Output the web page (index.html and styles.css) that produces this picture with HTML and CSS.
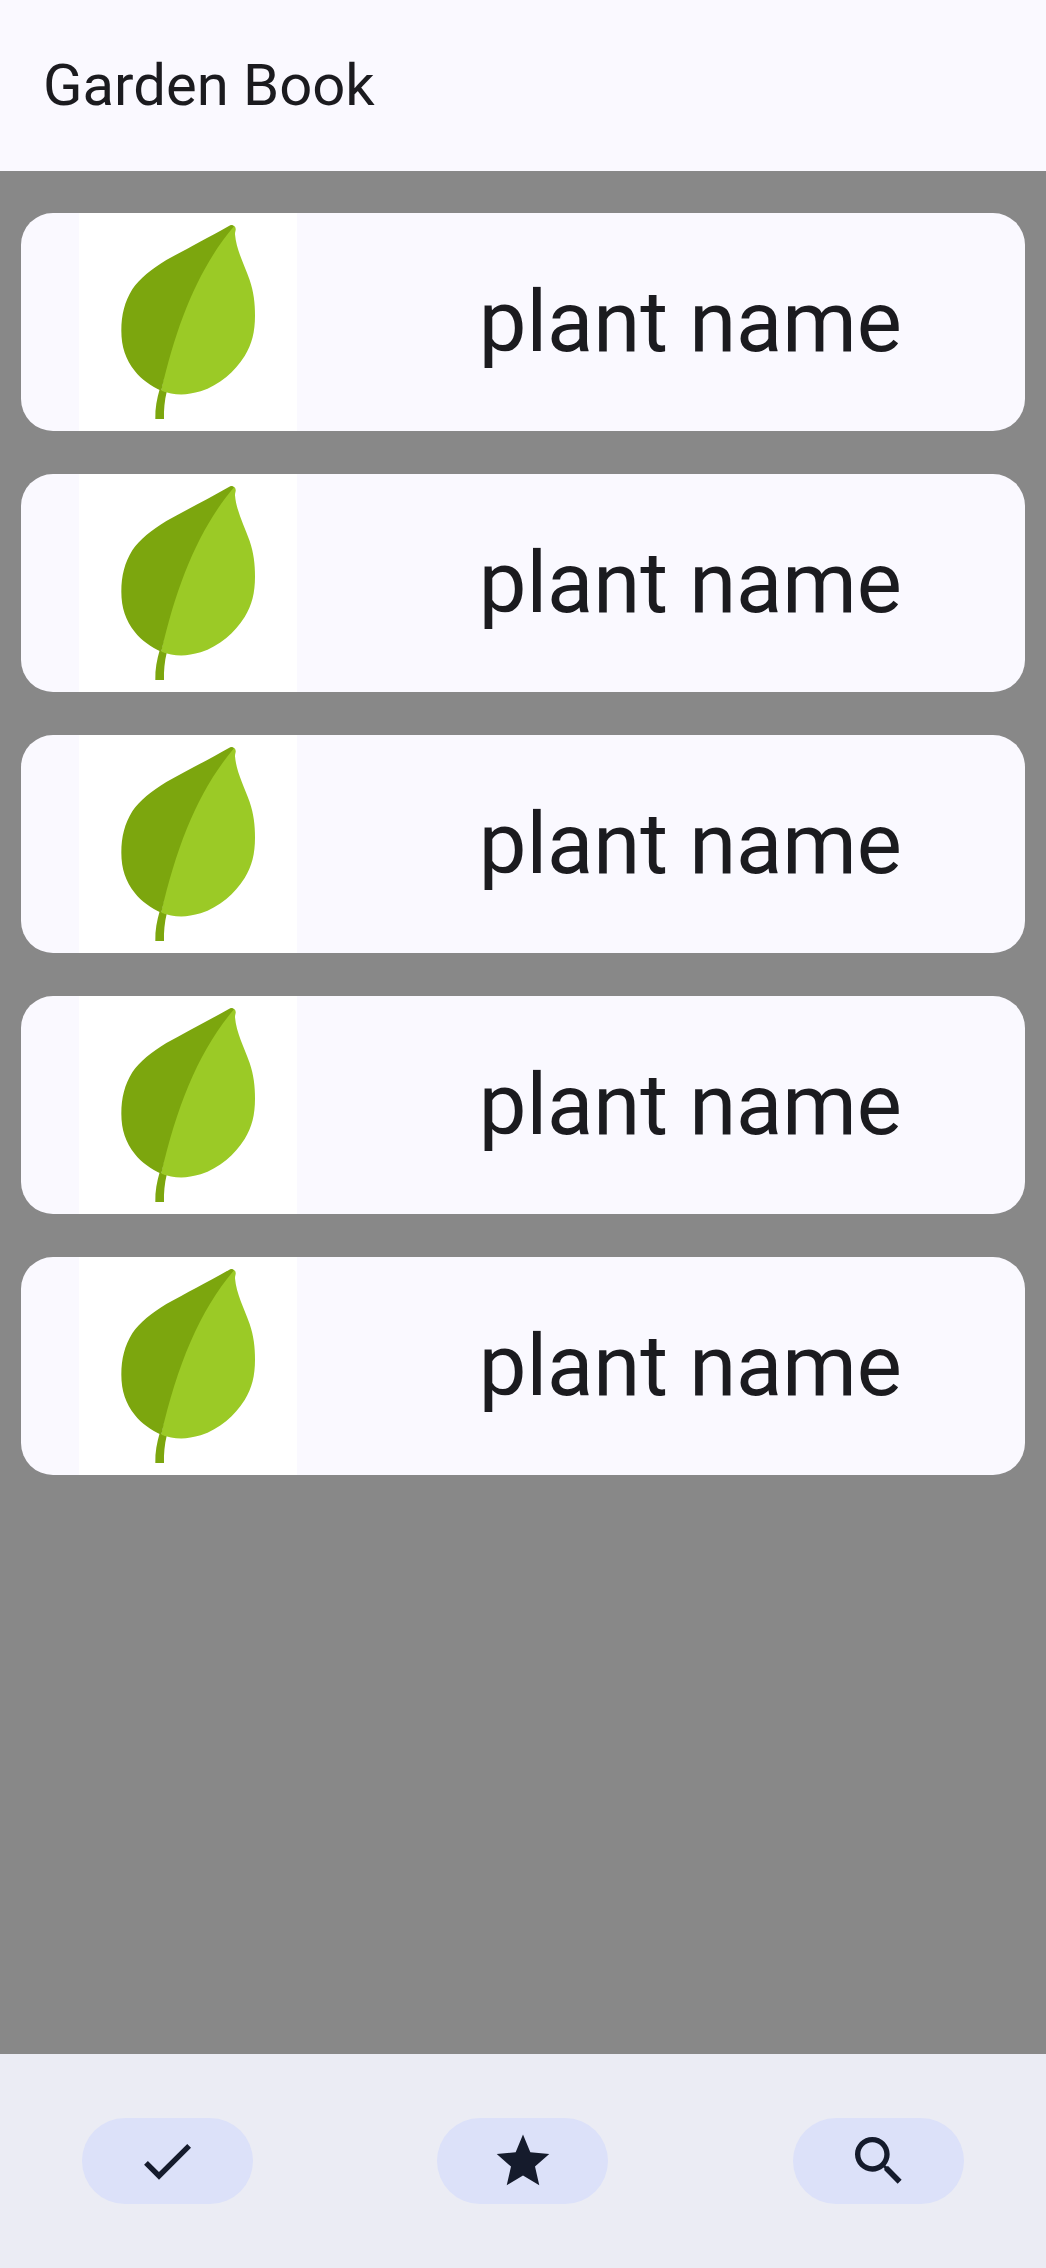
FILE: index.html
```html
<!DOCTYPE html>
<html lang="en">
<head>
<meta charset="utf-8">
<meta name="viewport" content="width=device-width, initial-scale=1">
<title>Garden Book</title>
<link rel="stylesheet" href="styles.css">
</head>
<body>
<svg class="defs" aria-hidden="true">
  <symbol id="leaf" viewBox="238 39 654 654">
    <path fill="#7ca60e" d="M480 568C472 596 466 625 467 657L493 657C492 630 495 600 501 576Z"/>
    <path fill="#9bca26" d="M485 572C520 585 556 588 603 574C660 555 705 515 735 468C757 432 766 395 766 347C766 310 762 275 750 240C733 192 710 150 706 103C706 95 709 91 708 86C707 78 700 74 690 78L540 260Z"/>
    <path fill="#7ca60e" d="M485 572C455 558 425 538 405 512C378 478 365 440 365 392C365 345 375 305 398 268C420 235 455 208 500 180C560 147 620 116 689 77C694 74 699 75 703 79C600 200 532 365 485 572Z"/>
  </symbol>
</svg>
<header class="top-bar">
  <h1 class="title">Garden Book</h1>
</header>
<main class="content">
  <ul class="plants">
    <li class="card"><svg class="picture" role="img" aria-label="Leaf"><use href="#leaf"/></svg><span class="name">plant name</span></li>
    <li class="card"><svg class="picture" role="img" aria-label="Leaf"><use href="#leaf"/></svg><span class="name">plant name</span></li>
    <li class="card"><svg class="picture" role="img" aria-label="Leaf"><use href="#leaf"/></svg><span class="name">plant name</span></li>
    <li class="card"><svg class="picture" role="img" aria-label="Leaf"><use href="#leaf"/></svg><span class="name">plant name</span></li>
    <li class="card"><svg class="picture" role="img" aria-label="Leaf"><use href="#leaf"/></svg><span class="name">plant name</span></li>
  </ul>
</main>
<nav class="bottom-bar">
  <button class="tab" type="button" aria-label="Done"><svg class="icon" viewBox="0 0 24 24"><path d="M9 16.17 4.83 12l-1.42 1.41L9 19 21 7l-1.41-1.41z"/></svg></button>
  <button class="tab" type="button" aria-label="Favorites"><svg class="icon" viewBox="0 0 24 24"><path d="M12 2.1 14.75 8.75 21.85 9.35 16.5 14.1 18.1 21.1 12 17.4 5.9 21.1 7.5 14.1 2.15 9.35 9.25 8.75z"/></svg></button>
  <button class="tab" type="button" aria-label="Search"><svg class="icon" viewBox="0 0 24 24"><path d="M15.5 14h-.79l-.28-.27C15.41 12.59 16 11.11 16 9.5 16 5.91 13.09 3 9.5 3S3 5.91 3 9.5 5.91 16 9.5 16c1.61 0 3.09-.59 4.23-1.57l.27.28v.79l5 4.99L20.49 19l-4.99-5zm-6 0C7.01 14 5 11.99 5 9.5S7.01 5 9.5 5 14 7.01 14 9.5 11.99 14 9.5 14z"/></svg></button>
</nav>
</body>
</html>
```
FILE: styles.css
```css
* {
  box-sizing: border-box;
}

body {
  display: flex;
  flex-direction: column;
  min-height: 100vh;
  margin: 0;
  background: #888888;
  color: #1b1b1f;
  font-family: Roboto, sans-serif;
}

.defs {
  display: none;
}

.top-bar {
  padding: 47px 43px 48px;
  background: #faf9ff;
}

.title {
  margin: 0;
  font-size: 58px;
  font-weight: 400;
  line-height: 76px;
}

.content {
  flex: 1;
  padding: 42px 21px;
}

.plants {
  display: flex;
  flex-direction: column;
  gap: 43px;
  margin: 0;
  padding: 0;
  list-style: none;
}

.card {
  display: grid;
  grid-template-columns: 1fr 2fr;
  align-items: center;
  justify-items: center;
  overflow: hidden;
  border-radius: 32px;
  background: #faf9ff;
}

.picture {
  display: block;
  width: 218px;
  height: 218px;
  background: #ffffff;
}

.name {
  font-size: 85px;
  line-height: 108px;
}

.bottom-bar {
  display: grid;
  grid-template-columns: repeat(3, 1fr);
  gap: 21px;
  justify-items: center;
  padding: 64px 0;
  background: #ebecf4;
}

.tab {
  display: flex;
  align-items: center;
  justify-content: center;
  width: 171px;
  height: 86px;
  padding: 0;
  border: 0;
  border-radius: 43px;
  background: #dce1f9;
  color: #151b2c;
}

.icon {
  width: 64px;
  height: 64px;
  fill: currentColor;
}
```
